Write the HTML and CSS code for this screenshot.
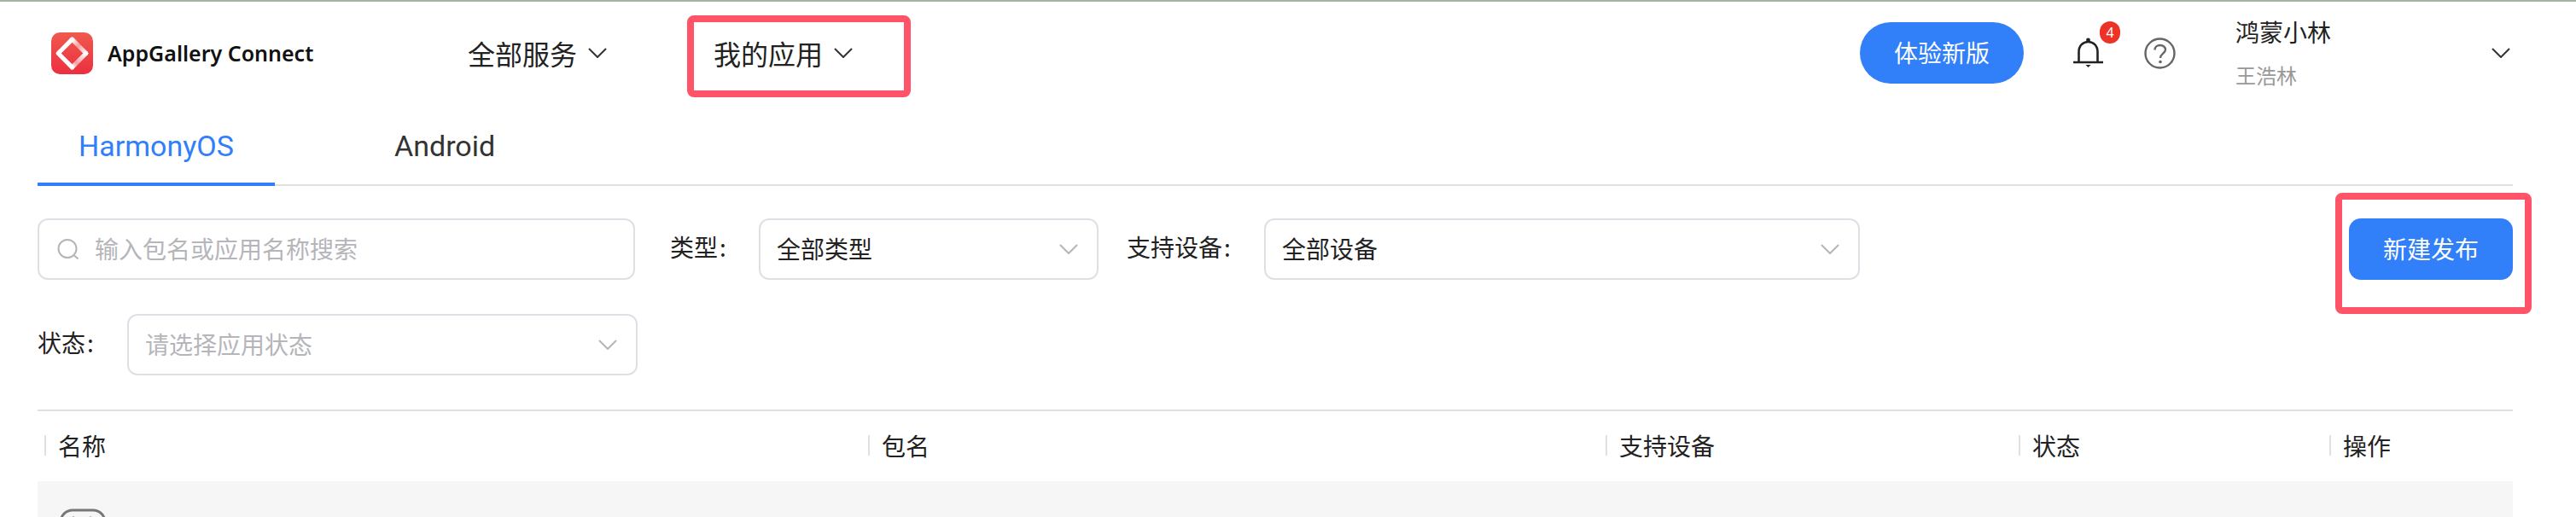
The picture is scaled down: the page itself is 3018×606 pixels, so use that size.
FILE: index.html
```html
<!DOCTYPE html>
<html lang="zh-CN">
<head>
  <meta charset="UTF-8" />
  <title>AppGallery Connect</title>
  <link rel="stylesheet" href="styles.css">
</head>
<body>

<header class="top-bar">
  <div class="logo">
    <svg class="logo-mark" width="49" height="49" viewBox="0 0 48 48">
      <defs>
        <linearGradient id="logo-bg" x1="0" y1="0" x2="0" y2="1">
          <stop offset="0" stop-color="#f0594e"/>
          <stop offset="1" stop-color="#ec2f40"/>
        </linearGradient>
        <linearGradient id="fade-a" gradientUnits="userSpaceOnUse" x1="24" y1="8" x2="40" y2="24">
          <stop offset="0" stop-color="#fff"/>
          <stop offset="0.45" stop-color="#fff" stop-opacity="0.45"/>
          <stop offset="1" stop-color="#fff"/>
        </linearGradient>
        <linearGradient id="fade-b" gradientUnits="userSpaceOnUse" x1="40" y1="24" x2="24" y2="40">
          <stop offset="0" stop-color="#fff"/>
          <stop offset="0.7" stop-color="#fff" stop-opacity="0.5"/>
          <stop offset="1" stop-color="#fff"/>
        </linearGradient>
      </defs>
      <rect width="48" height="48" rx="10" fill="url(#logo-bg)"/>
      <g fill="none" stroke-width="5" stroke-linecap="round">
        <path d="M24 40 L8 24 L24 8" stroke="#fff" stroke-linejoin="round"/>
        <path d="M24 8 L40 24" stroke="url(#fade-a)"/>
        <path d="M40 24 L24 40" stroke="url(#fade-b)"/>
      </g>
    </svg>
    <span class="logo-text">AppGallery Connect</span>
  </div>

  <nav class="main-nav">
    <a class="nav-item">全部服务
      <svg class="chevron" width="22" height="12" viewBox="0 0 22 12"><path d="M1 1 L11 11 L21 1"/></svg>
    </a>
    <a class="nav-item">我的应用
      <svg class="chevron" width="22" height="12" viewBox="0 0 22 12"><path d="M1 1 L11 11 L21 1"/></svg>
    </a>
  </nav>

  <div class="top-right">
    <button class="try-btn">体验新版</button>
    <div class="bell">
      <svg width="35" height="36" viewBox="0 0 35 36">
        <circle cx="17.5" cy="3" r="2.4" fill="#222"/>
        <path d="M6.5 28 V17 C6.5 9.5 11.5 5 17.5 5 C23.5 5 28.5 9.5 28.5 17 V28" fill="none" stroke="#222" stroke-width="2.6"/>
        <path d="M0 29 H35" stroke="#222" stroke-width="2.6"/>
        <path d="M14.5 32 H20.5 L17.5 35 Z" fill="#222"/>
      </svg>
      <span class="badge">4</span>
    </div>
    <svg class="help" width="37" height="37" viewBox="0 0 37 37">
      <circle cx="18.5" cy="18.5" r="17" fill="none" stroke="#666" stroke-width="2.4"/>
      <path d="M12.5 14.5 C12.5 11 15.5 9 18.7 9 C22.2 9 25 11.3 25 14.3 C25 18.5 19 19 19 24" fill="none" stroke="#666" stroke-width="2.4"/>
      <circle cx="19" cy="28.5" r="1.8" fill="#666"/>
    </svg>
    <div class="user">
      <div class="user-names">
        <div class="user-team">鸿蒙小林</div>
        <div class="user-name">王浩林</div>
      </div>
      <svg class="chevron" width="22" height="12" viewBox="0 0 22 12"><path d="M1 1 L11 11 L21 1"/></svg>
    </div>
  </div>
</header>

<div class="tabs">
  <div class="tab active">HarmonyOS</div>
  <div class="tab">Android</div>
</div>

<section class="filters">
  <div class="filter-row">
    <div class="field search-field">
      <svg class="search-icon" width="26" height="24" viewBox="0 0 26 24">
        <circle cx="12" cy="11.5" r="10.5" fill="none" stroke="#b5b5ba" stroke-width="2"/>
        <path d="M19.5 19 L24.5 23.5" stroke="#b5b5ba" stroke-width="2"/>
      </svg>
      <span class="placeholder">输入包名或应用名称搜索</span>
    </div>
    <label class="filter-label type-label">类型<i>:</i></label>
    <div class="field select-type">
      <span>全部类型</span>
      <svg class="chevron light" width="22" height="12" viewBox="0 0 22 12"><path d="M1 1 L11 11 L21 1"/></svg>
    </div>
    <label class="filter-label device-label">支持设备<i>:</i></label>
    <div class="field select-device">
      <span>全部设备</span>
      <svg class="chevron light" width="22" height="12" viewBox="0 0 22 12"><path d="M1 1 L11 11 L21 1"/></svg>
    </div>
    <button class="new-btn">新建发布</button>
  </div>
  <div class="filter-row">
    <label class="filter-label status-label">状态<i>:</i></label>
    <div class="field select-status">
      <span class="placeholder">请选择应用状态</span>
      <svg class="chevron light" width="22" height="12" viewBox="0 0 22 12"><path d="M1 1 L11 11 L21 1"/></svg>
    </div>
  </div>
</section>

<div class="table-head">
  <div class="th">名称</div>
  <div class="th">包名</div>
  <div class="th">支持设备</div>
  <div class="th">状态</div>
  <div class="th">操作</div>
</div>

<div class="table-row">
  <svg class="app-icon" width="56" height="56" viewBox="0 0 56 56">
    <rect x="2" y="2" width="52" height="52" rx="14" fill="none" stroke="#777" stroke-width="3"/>
    <circle cx="17" cy="11" r="1.8" fill="#999"/>
    <circle cx="37" cy="11" r="1.8" fill="#999"/>
  </svg>
</div>

<!-- red marks drawn over the page -->
<div class="mark mark-nav"></div>
<div class="mark mark-new"></div>

</body>
</html>
```

FILE: styles.css
```css
* {
  box-sizing: border-box;
  margin: 0;
  padding: 0;
}

body {
  position: relative;
  width: 3018px;
  height: 606px;
  overflow: hidden;
  background: #fff;
  color: #222;
  border-top: 2px solid #a3b5a0;
  font-family: "Noto Sans CJK SC", "Noto Sans", sans-serif;
  font-size: 28px;
}

.chevron {
  flex: none;
  fill: none;
  stroke: #333;
  stroke-width: 2;
}

.chevron.light {
  stroke: #b5b5ba;
}

/* top bar */
.top-bar {
  display: flex;
  align-items: center;
  height: 120px;
  padding-left: 60px;
}

.logo {
  display: flex;
  align-items: center;
  gap: 17px;
  width: 488px;
}

.logo-text {
  font-family: "Noto Sans", sans-serif;
  font-size: 25px;
  font-weight: 600;
  color: #111;
}

.main-nav {
  display: flex;
  gap: 125px;
}

.nav-item {
  display: flex;
  align-items: center;
  gap: 13px;
  font-size: 32px;
  color: #222;
}

.top-right {
  display: flex;
  align-items: center;
  margin-left: auto;
  padding-right: 77px;
}

.try-btn {
  width: 192px;
  height: 72px;
  padding-bottom: 2px;
  border: none;
  border-radius: 36px;
  background: #317ff9;
  color: #fff;
  font-family: inherit;
  font-size: 28px;
}

.bell {
  position: relative;
  display: flex;
  margin-left: 58px;
}

.badge {
  position: absolute;
  top: -19px;
  left: 31px;
  width: 24px;
  height: 26px;
  border-radius: 13px;
  background: #ed3327;
  color: #fff;
  font-family: "Noto Sans", sans-serif;
  font-size: 16px;
  line-height: 26px;
  text-align: center;
}

.help {
  margin-left: 48px;
}

.user {
  display: flex;
  align-items: center;
  justify-content: space-between;
  width: 322px;
  margin-left: 70px;
}

.user-team {
  margin-top: -3px;
  font-size: 28px;
  line-height: 40px;
}

.user-name {
  margin-top: 14px;
  font-size: 24px;
  line-height: 34px;
  color: #999;
}

/* tabs */
.tabs {
  display: flex;
  gap: 92px;
  height: 96px;
  margin: 0 74px 0 44px;
  border-bottom: 2px solid #e0e0e0;
}

.tab {
  width: 278px;
  height: 96px;
  padding: 24px 0 0 48px;
  font-family: Roboto, sans-serif;
  font-size: 34px;
  line-height: 50px;
  color: #333;
}

.tab.active {
  color: #317ff9;
  border-bottom: 4px solid #317ff9;
}

/* filters */
.filters {
  display: flex;
  flex-direction: column;
  gap: 40px;
  margin: 0 74px 0 44px;
  padding: 38px 0 40px;
  border-bottom: 2px solid #e0e0e0;
}

.filter-row {
  display: flex;
  align-items: center;
}

.field {
  display: flex;
  align-items: center;
  justify-content: space-between;
  height: 72px;
  padding: 0 22px 0 19px;
  border: 2px solid #dfe0e6;
  border-radius: 12px;
}

.field span {
  position: relative;
  top: -1px;
}

.placeholder {
  color: #b5b5ba;
}

.search-field {
  justify-content: flex-start;
  gap: 18px;
  width: 700px;
  padding-left: 21px;
}

.filter-label {
  position: relative;
  top: -3px;
}

.filter-label i {
  margin-left: 2px;
  font-style: normal;
}

.type-label {
  width: 104px;
  margin-left: 41px;
}

.select-type {
  width: 398px;
}

.device-label {
  width: 161px;
  margin-left: 33px;
}

.select-device {
  width: 698px;
}

.new-btn {
  width: 192px;
  height: 72px;
  margin-left: auto;
  padding-bottom: 2px;
  border: none;
  border-radius: 14px;
  background: #317ff9;
  color: #fff;
  font-family: inherit;
  font-size: 28px;
}

.status-label {
  width: 105px;
}

.select-status {
  width: 598px;
}

/* table */
.table-head {
  display: grid;
  grid-template-columns: 965px 864px 484px 364px 1fr;
  align-items: center;
  height: 82px;
  margin: 0 74px 0 44px;
  padding-left: 8px;
  padding-bottom: 2px;
}

.th {
  display: flex;
  align-items: center;
  gap: 14px;
}

.th::before {
  content: "";
  width: 2px;
  height: 24px;
  background: #e0e0e0;
}

.table-row {
  height: 42px;
  margin: 0 74px 0 44px;
  padding: 32px 0 0 25px;
  overflow: hidden;
  background: #f6f6f6;
}

.app-icon {
  display: block;
}

/* annotations */
.mark {
  position: absolute;
  border: 8px solid #ff5367;
  border-radius: 8px;
}

.mark-nav {
  top: 16px;
  left: 805px;
  width: 262px;
  height: 96px;
}

.mark-new {
  top: 224px;
  left: 2736px;
  width: 230px;
  height: 142px;
}
```
